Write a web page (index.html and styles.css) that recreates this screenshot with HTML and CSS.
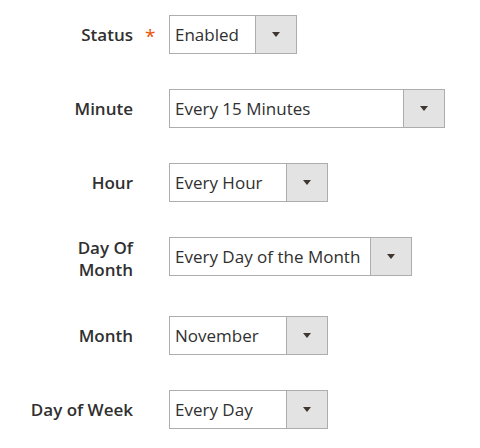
FILE: index.html
```html
<!DOCTYPE html>
<html lang="en">

<head>
    <meta charset="UTF-8">
    <title>Cron Schedule</title>
    <link rel="stylesheet" href="styles.css">
</head>

<body>
    <div class="form">
        <div class="field">
            <label class="field-label required">Status</label>
            <div class="select w-status">
                <span class="select-value">Enabled</span>
                <span class="select-arrow"></span>
            </div>
        </div>
        <div class="field">
            <label class="field-label">Minute</label>
            <div class="select w-wide">
                <span class="select-value">Every 15 Minutes</span>
                <span class="select-arrow"></span>
            </div>
        </div>
        <div class="field">
            <label class="field-label">Hour</label>
            <div class="select w-mid">
                <span class="select-value">Every Hour</span>
                <span class="select-arrow"></span>
            </div>
        </div>
        <div class="field field-top">
            <label class="field-label">Day Of<br>Month</label>
            <div class="select w-dom">
                <span class="select-value">Every Day of the Month</span>
                <span class="select-arrow"></span>
            </div>
        </div>
        <div class="field">
            <label class="field-label">Month</label>
            <div class="select w-mid">
                <span class="select-value">November</span>
                <span class="select-arrow"></span>
            </div>
        </div>
        <div class="field">
            <label class="field-label">Day of Week</label>
            <div class="select w-mid">
                <span class="select-value">Every Day</span>
                <span class="select-arrow"></span>
            </div>
        </div>
    </div>
</body>

</html>
```

FILE: styles.css
```css
body {
    margin: 0;
    background-color: #ffffff;
    font-family: 'Open Sans', 'Liberation Sans', sans-serif;
    color: #303030;
}

.form {
    padding-top: 15px;
    display: flex;
    flex-direction: column;
    gap: 35px;
}

.field {
    display: flex;
    align-items: center;
}

/* two-line labels hang from the top of the control */
.field-top {
    align-items: flex-start;
}

.field-label {
    position: relative;
    width: 133px;
    text-align: right;
    font-size: 17px;
    font-weight: 600;
    line-height: 22px;
}

/* required marker sits in the gap between label and control */
.field-label.required::after {
    content: '*';
    position: absolute;
    left: 145px;
    top: 1px;
    color: #eb5202;
    font-size: 19px;
    font-weight: 400;
}

.select {
    margin-left: 36px;
    height: 39px;
    box-sizing: border-box;
    border: 1px solid #adadad;
    display: flex;
    background-color: #ffffff;
}

.w-status {
    width: 128px;
}

.w-wide {
    width: 276px;
}

.w-mid {
    width: 159px;
}

.w-dom {
    width: 243px;
}

.select-value {
    flex: 1;
    padding-left: 5px;
    font-size: 17px;
    line-height: 37px;
    white-space: nowrap;
}

.select-arrow {
    width: 40px;
    border-left: 1px solid #adadad;
    background-color: #e3e3e3;
    display: flex;
    align-items: center;
    justify-content: center;
}

.select-arrow::before {
    content: '';
    border-left: 4.5px solid transparent;
    border-right: 4.5px solid transparent;
    border-top: 5px solid #41362f;
}
```
